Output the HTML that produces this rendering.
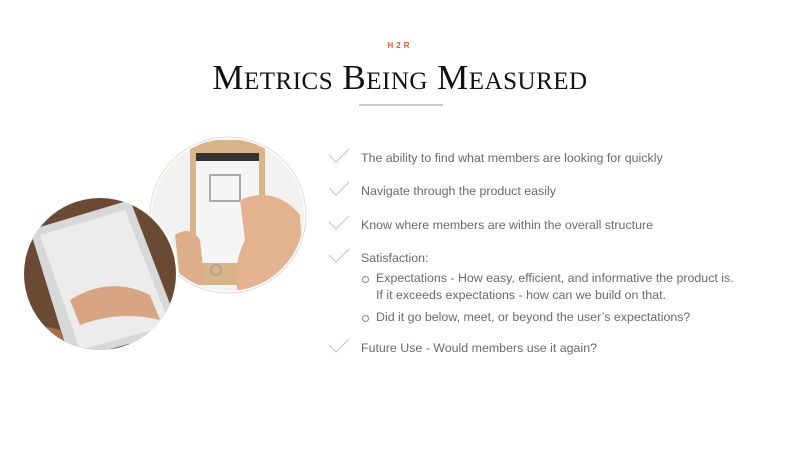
<!DOCTYPE html>
<html><head><style>
body{margin:0;width:800px;height:450px;background:#fff;position:relative;overflow:hidden;font-family:"Liberation Sans",sans-serif}
.h2r{position:absolute;top:41px;left:0;width:800px;text-align:center;color:#f05a28;font-size:8px;font-weight:bold;letter-spacing:3px}
h1{position:absolute;top:58px;left:0;width:800px;text-align:center;margin:0;font-family:"Liberation Serif",serif;font-weight:normal;font-size:35px;font-variant:small-caps;color:#111;letter-spacing:0.5px}
.rule{position:absolute;left:359px;top:104px;width:84px;height:2px;background:#ccc}
.t{position:absolute;left:361px;color:#6a6a6a;font-size:12.4px;white-space:nowrap}
.s{left:376px}
.c{position:absolute;left:328px}
.b{position:absolute;left:362px;width:5px;height:5px;border:1px solid #888;border-radius:50%}
</style></head><body>
<div class="h2r">H2R</div>
<h1>Metrics Being Measured</h1>
<div class="rule"></div>

<svg style="position:absolute;left:0;top:0" width="320" height="380">
<defs>
<clipPath id="cr"><circle cx="228" cy="215" r="76"/></clipPath>
<clipPath id="cl"><circle cx="100" cy="274" r="76"/></clipPath>
</defs>
<circle cx="228" cy="215" r="78" fill="#fff" stroke="#ddd"/>
<g clip-path="url(#cr)">
<rect x="150" y="138" width="160" height="160" fill="#f4f2f0"/>
<rect x="190" y="140" width="75" height="145" rx="10" fill="#d9b38a"/>
<rect x="196" y="153" width="63" height="110" fill="#f5f5f5"/>
<rect x="196" y="153" width="63" height="8" fill="#333"/>
<rect x="210" y="175" width="30" height="26" fill="none" stroke="#aaa" stroke-width="2"/>
<circle cx="216" cy="270" r="5" fill="none" stroke="#999"/>
<path d="M240 200 Q275 185 300 215 L305 300 L240 300 Q230 270 245 240 Z" fill="#e3b38f"/>
<path d="M175 235 Q190 225 200 240 L205 285 L180 280 Z" fill="#dcae8a"/>
</g>
<circle cx="100" cy="274" r="78" fill="#fff"/>
<g clip-path="url(#cl)">
<rect x="20" y="195" width="160" height="160" fill="#6b4a35"/>
<path d="M30 230 L130 200 L180 330 L70 360 Z" fill="#d8d8d8"/>
<path d="M40 235 L125 210 L170 325 L80 350 Z" fill="#ececec"/>
<path d="M70 300 Q110 275 150 295 L160 320 Q120 310 80 325 Z" fill="#d7a584"/>
<path d="M20 320 L60 330 L70 360 L20 360 Z" fill="#a86e4e"/>
</g>
</svg>

<svg class="c" style="top:148px" width="22" height="16"><path d="M1 7 L8 14 L21 1" fill="none" stroke="#c4c4c4" stroke-width="1"/></svg>
<div class="t" style="top:151px">The ability to find what members are looking for quickly</div>
<svg class="c" style="top:181px" width="22" height="16"><path d="M1 7 L8 14 L21 1" fill="none" stroke="#c4c4c4" stroke-width="1"/></svg>
<div class="t" style="top:184px">Navigate through the product easily</div>
<svg class="c" style="top:215px" width="22" height="16"><path d="M1 7 L8 14 L21 1" fill="none" stroke="#c4c4c4" stroke-width="1"/></svg>
<div class="t" style="top:218px">Know where members are within the overall structure</div>
<svg class="c" style="top:248px" width="22" height="16"><path d="M1 7 L8 14 L21 1" fill="none" stroke="#c4c4c4" stroke-width="1"/></svg>
<div class="t" style="top:251px">Satisfaction:</div>
<div class="b" style="top:276px"></div>
<div class="t s" style="top:271px">Expectations - How easy, efficient, and informative the product is.</div>
<div class="t s" style="top:288px">If it exceeds expectations - how can we build on that.</div>
<div class="b" style="top:315px"></div>
<div class="t s" style="top:310px">Did it go below, meet, or beyond the user’s expectations?</div>
<svg class="c" style="top:338px" width="22" height="16"><path d="M1 7 L8 14 L21 1" fill="none" stroke="#c4c4c4" stroke-width="1"/></svg>
<div class="t" style="top:341px">Future Use - Would members use it again?</div>
</body></html>
